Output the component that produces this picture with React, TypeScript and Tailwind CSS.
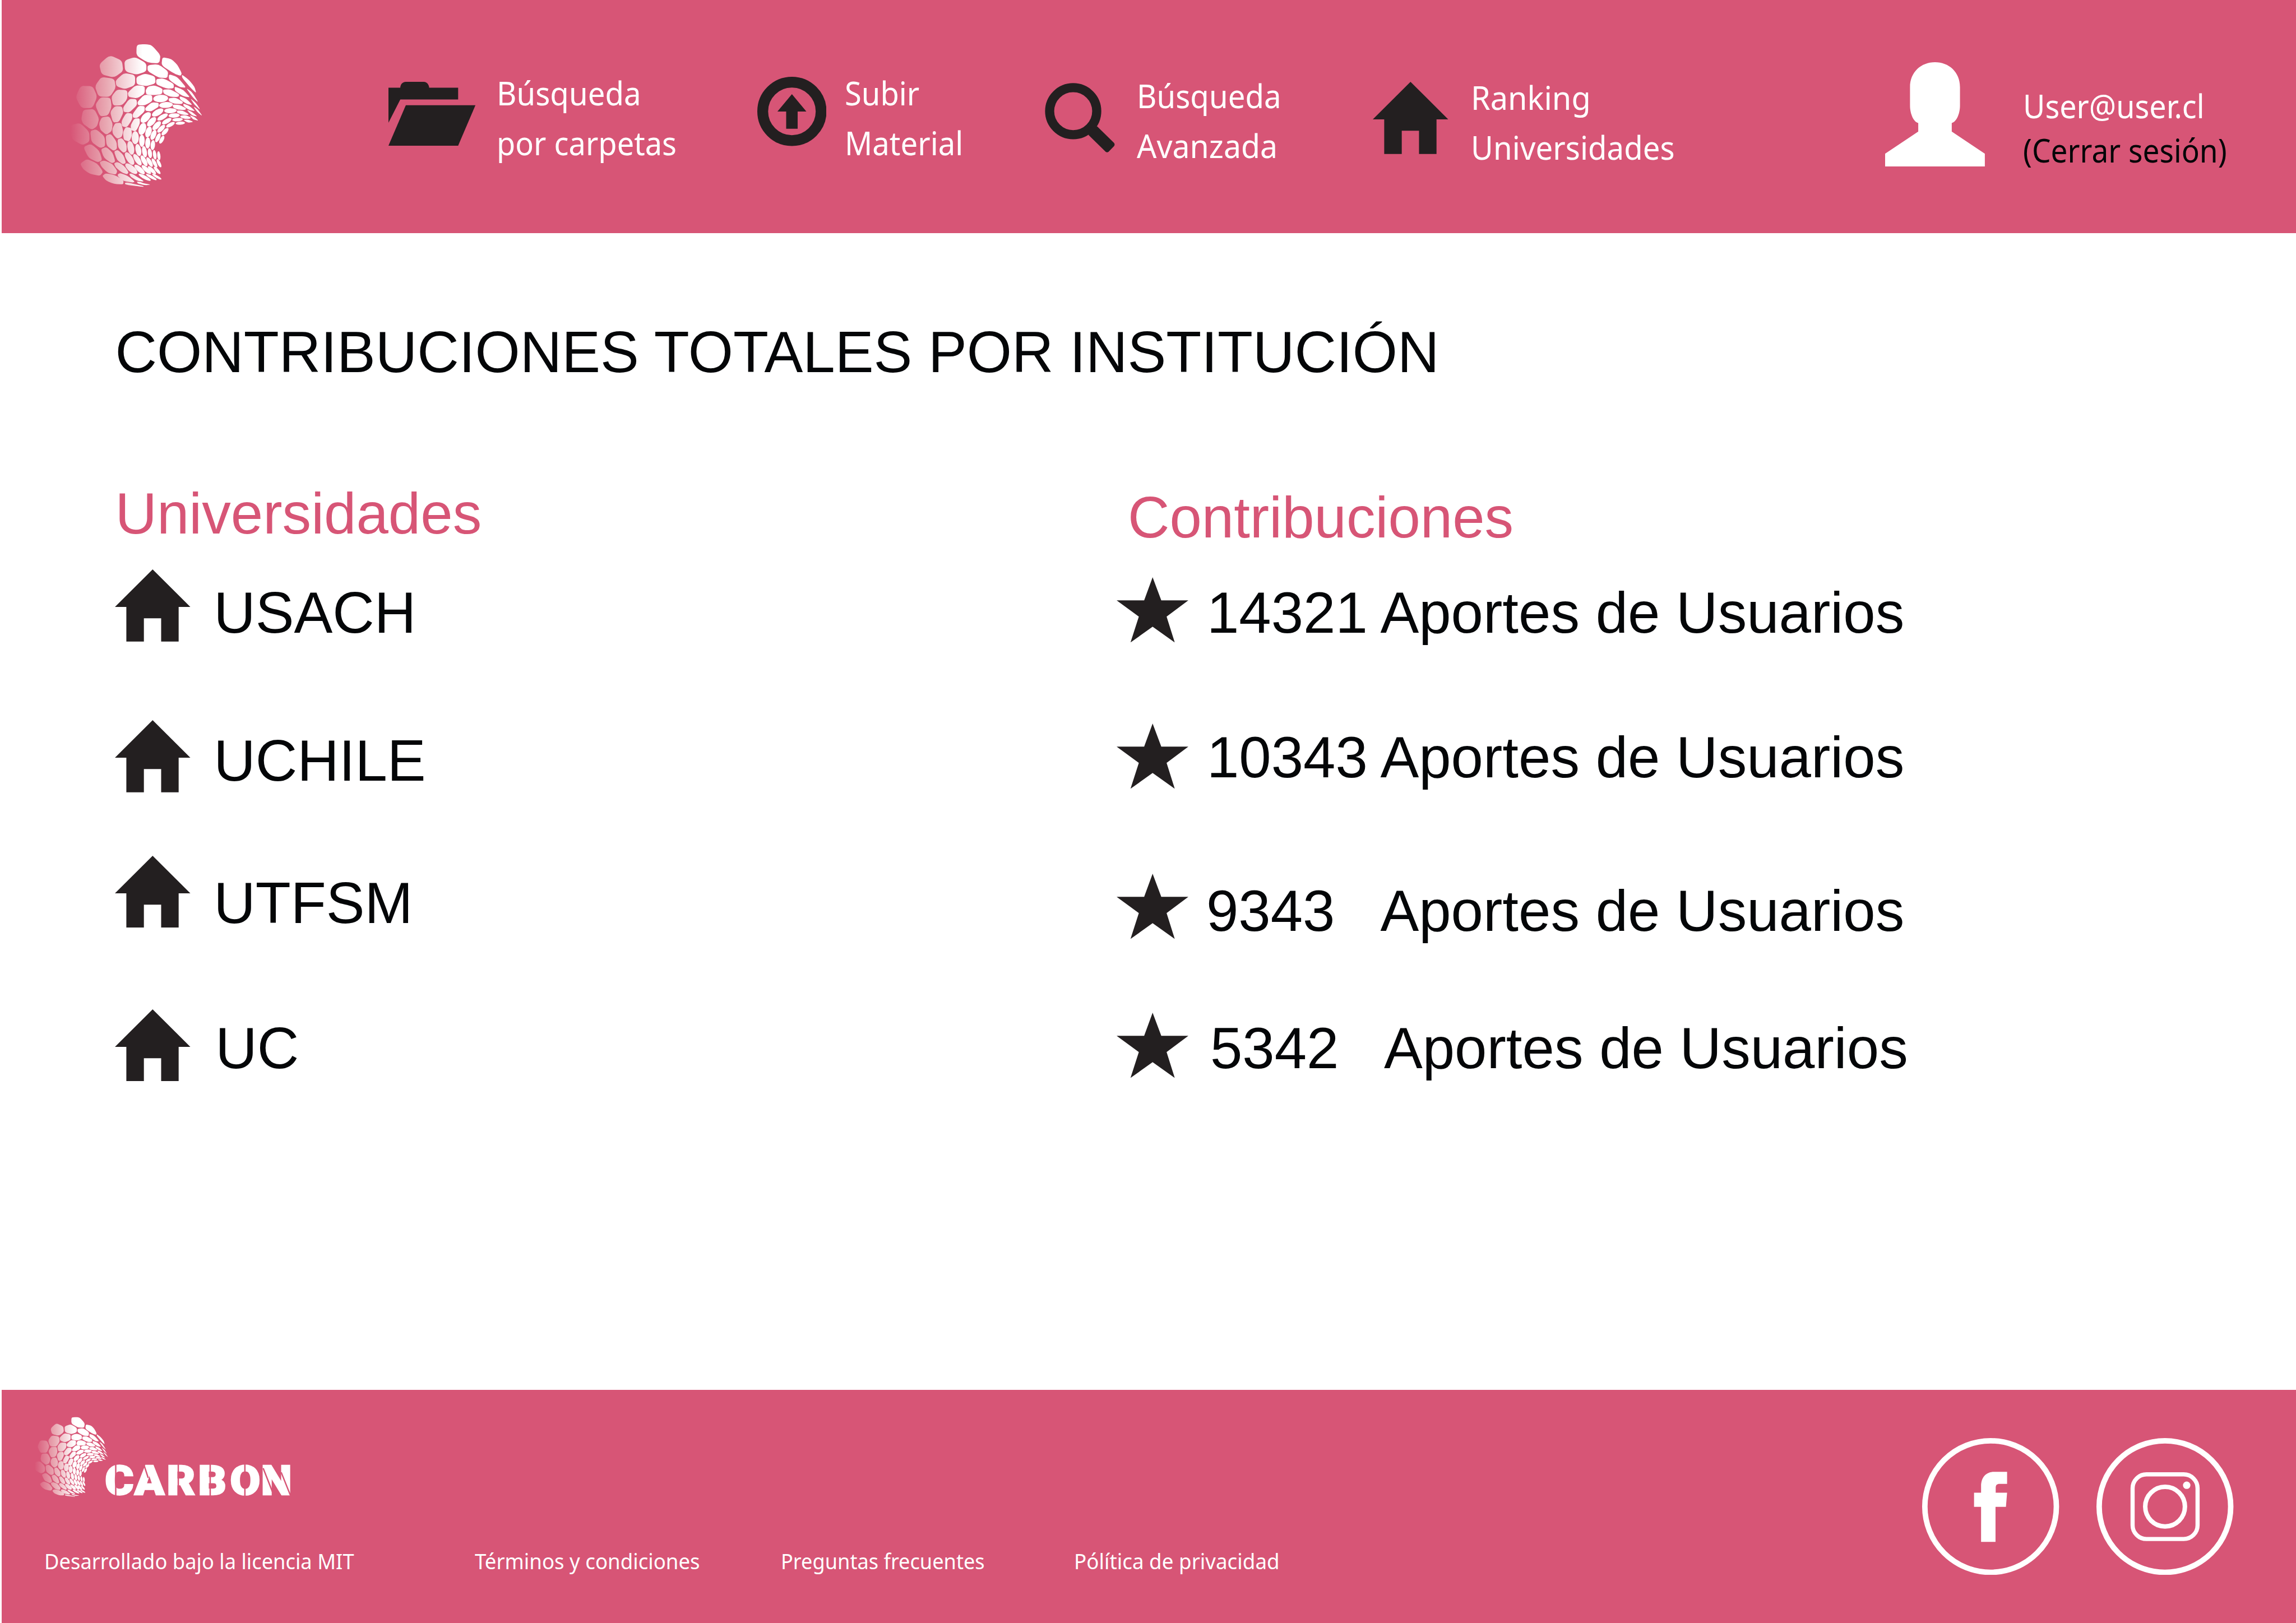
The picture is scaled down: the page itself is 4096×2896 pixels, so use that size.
import type { ReactNode } from "react";

/* ---------- Logo ---------- */

// Large cells, as corner points that are rounded when drawn.
const CELLS: string[] = [
  "497,80 553,75 594,82 652,146 644,200 572,196 495,150",
  "664,160 722,172 760,208 790,264 782,282 735,264 658,212",
  "790,272 835,306 872,352 884,394 850,362 792,294",
  "254,206 322,147 402,182 410,250 350,292 270,272",
  "417,182 487,158 560,200 560,252 496,274 422,252",
  "568,212 637,205 702,252 696,296 640,292 568,250",
  "706,270 760,288 820,358 775,354 706,306",
  "818,360 855,385 899,456 860,420",
  "844,426 882,457 911,503 874,470",
  "864,478 895,500 924,543 888,513",
  "226,348 268,288 352,300 362,358 324,417 250,416",
  "360,312 415,262 487,276 487,342 420,368 366,348",
  "495,288 552,266 616,285 620,330 560,348 497,336",
  "624,302 670,297 737,332 738,362 690,364 624,336",
  "743,350 797,370 845,421 800,414 745,378",
  "775,412 820,430 860,471 823,464 778,434",
  "799,460 840,477 878,511 838,502 801,478",
  "821,500 856,515 892,545 855,537",
  "839,535 872,548 899,572 863,564",
  "101,420 134,346 212,348 242,415 210,490 139,490",
  "333,415 370,370 437,374 437,432 402,472 344,474",
  "439,390 490,342 550,347 549,396 500,427 445,418",
  "555,376 570,350 612,343 666,364 662,400 610,406 560,402",
  "667,371 715,368 774,400 768,418 715,417 672,396",
  "704,426 750,422 798,450 792,464 740,462 706,446",
  "730,467 775,469 819,492 811,503 765,500 733,486",
  "757,506 795,506 836,530 828,535 790,532 760,521",
  "778,540 815,536 850,551 842,560 812,560 784,552",
  "799,567 830,564 866,580 830,585",
  "228,470 262,420 327,422 335,482 312,537 260,545",
  "325,515 355,478 402,479 411,520 382,580 344,584",
  "409,485 450,430 496,432 500,470 450,519 413,515",
  "502,450 545,404 597,406 599,445 550,472 506,472",
  "138,562 150,501 222,496 254,558 240,610 204,631 150,592",
  "253,590 270,550 320,543 342,592 335,640 300,664 262,632",
  "339,625 358,587 397,586 410,640 400,678 370,689 342,657",
  "398,575 430,521 468,526 469,562 435,614 403,610",
  "471,528 510,476 549,477 549,512 500,555 473,552",
  "552,490 595,452 640,456 640,482 590,512 555,508",
  "67,600 130,586 190,645 191,708 145,731 74,690",
  "196,638 235,627 290,675 293,738 260,749 204,710",
  "296,668 330,657 367,708 370,755 346,768 302,732",
  "373,692 402,684 432,724 432,770 410,781 377,747",
  "408,650 425,613 462,618 467,665 451,707 414,697",
  "458,600 482,558 517,557 518,592 492,642 461,634",
  "151,742 200,722 255,766 274,828 245,842 185,812",
  "265,756 300,742 342,780 359,838 335,848 284,812",
  "350,770 375,761 412,795 428,847 405,854 369,825",
  "130,850 175,820 240,848 280,902 260,930 192,916 150,886",
  "256,840 285,829 337,850 372,897 362,922 310,910 270,872",
  "350,848 375,839 417,865 445,907 435,920 400,907 362,876",
  "274,930 295,913 355,923 412,960 410,985 350,982 300,962",
  "374,920 390,911 440,930 486,968 470,973 410,962 376,934",
  "448,917 465,914 542,962 538,967 500,961 460,937",
  "420,974 440,973 543,997 541,1001 424,987",
  "497,967 520,969 540,977 590,987 550,990 505,979",
];

// Small cells as [cx, cy, rx, ry, rotation].
const DOTS: number[][] = [
  [653, 428, 48, 24, -3], [687, 470, 44, 19, -4], [716, 507, 40, 16, -2], [740, 538, 36, 14, -3],
  [762, 565, 34, 11, -4], [780, 588, 30, 10, -4], [633, 519, 41, 19, -30], [665, 548, 38, 15, -30],
  [692, 575, 34, 14, -30], [716, 598, 31, 12, -28], [681, 643, 30, 13, -47], [660, 695, 28, 12, -62],
  [556, 551, 42, 23, -47], [594, 579, 38, 19, -47], [627, 604, 36, 17, -47], [656, 624, 33, 14, -45],
  [488, 682, 23, 42, 0], [534, 625, 23, 40, 18], [574, 645, 19, 36, 18], [606, 664, 16, 34, 22],
  [635, 682, 13, 32, 25], [459, 748, 21, 45, -12], [531, 702, 18, 39, 0], [569, 716, 16, 36, 2],
  [602, 730, 14, 32, 5], [508, 762, 18, 40, -12], [548, 773, 15, 37, -10], [583, 783, 13, 32, -8],
  [614, 793, 11, 31, -8], [641, 799, 10, 29, -6], [451, 817, 20, 47, -33], [502, 825, 17, 43, -33],
  [545, 832, 15, 39, -28], [581, 840, 13, 35, -30], [613, 846, 11, 33, -28], [642, 848, 10, 29, -26],
  [462, 883, 48, 20, 40], [516, 888, 43, 16, 42], [560, 889, 39, 14, 43], [596, 893, 35, 12, 45],
  [630, 894, 31, 10, 48], [549, 939, 44, 11, 28], [592, 937, 39, 9, 29], [628, 935, 34, 8, 30],
];

function roundedPath(points: string): string {
  const p = points.split(" ").map((s) => s.split(",").map(Number));
  const n = p.length;
  const at = (a: number[], b: number[], t: number) =>
    `${(a[0] + (b[0] - a[0]) * t).toFixed(1)} ${(a[1] + (b[1] - a[1]) * t).toFixed(1)}`;
  let d = "";
  for (let i = 0; i < n; i++) {
    const prev = p[(i + n - 1) % n];
    const cur = p[i];
    const next = p[(i + 1) % n];
    d += `${i === 0 ? "M" : "L"}${at(cur, prev, 0.3)}Q${cur[0]} ${cur[1]} ${at(cur, next, 0.3)}`;
  }
  return d + "Z";
}

function Logo({ id, className }: { id: string; className: string }) {
  return (
    <svg viewBox="0 0 1020 1080" className={className} aria-hidden="true">
      <defs>
        <linearGradient id={id} gradientUnits="userSpaceOnUse" x1="70" y1="0" x2="535" y2="0">
          <stop offset="0" stopColor="#d75576" />
          <stop offset="0.5" stopColor="#e9a9b3" />
          <stop offset="1" stopColor="#ffffff" />
        </linearGradient>
      </defs>
      <path fill={`url(#${id})`} d={CELLS.map(roundedPath).join("")} />
      {DOTS.map(([cx, cy, rx, ry, r], i) => {
        // The gradient follows the whole logo, so each dot's outline is computed in place.
        const a = (r * Math.PI) / 180;
        const pts = Array.from({ length: 28 }, (_, k) => {
          const t = (k / 28) * 2 * Math.PI;
          const x = rx * Math.cos(t);
          const y = ry * Math.sin(t);
          return `${(cx + x * Math.cos(a) - y * Math.sin(a)).toFixed(1)},${(cy + x * Math.sin(a) + y * Math.cos(a)).toFixed(1)}`;
        });
        return <polygon key={i} fill={`url(#${id})`} points={pts.join(" ")} />;
      })}
    </svg>
  );
}

/* ---------- Icons ---------- */

function House({ className }: { className: string }) {
  return (
    <svg viewBox="0 0 163 156" className={className} fill="#231f20" aria-hidden="true">
      <path d="M81.5 0 163 81H137.7V156H99.9V105.7H62.6V156H24.7V81H0Z" />
    </svg>
  );
}

function Star({ className }: { className: string }) {
  return (
    <svg viewBox="0 0 155 141" className={className} fill="#231f20" aria-hidden="true">
      <path d="M77.8 0 96.5 50H155L108 85 125.6 141 77.8 107 30 141 48 85 0 50H59.5Z" />
    </svg>
  );
}

function Folder({ className }: { className: string }) {
  return (
    <svg viewBox="0 0 188 138" className={className} fill="#231f20" aria-hidden="true">
      <path d="M0 12.7H25.5C26 5 31 0 37.5 0H76C82 0 87.5 5 88 12.7H150.6V38.3H25.6L0 88.5Z" />
      <path d="M37.5 50.7H188L150.6 138H0Z" />
    </svg>
  );
}

function Upload({ className }: { className: string }) {
  return (
    <svg viewBox="0 0 149.6 149.6" className={className} fill="#231f20" aria-hidden="true">
      <circle cx="74.8" cy="74.8" r="63.1" fill="none" stroke="#231f20" strokeWidth="23.4" />
      <path d="M74.8 37.5 106.1 75H87.2V112.4H62.4V75H43.5Z" />
    </svg>
  );
}

function Search({ className }: { className: string }) {
  return (
    <svg viewBox="0 0 152 151" className={className} fill="#231f20" aria-hidden="true">
      <circle cx="61.2" cy="61" r="50.9" fill="none" stroke="#231f20" strokeWidth="19.7" />
      <path d="M113 94 149.5 129.5Q152 133 149.5 136.5L138 148.5Q134.5 151.5 131 148.5L94.5 112.5 98 97Z" />
    </svg>
  );
}

function Person({ className }: { className: string }) {
  return (
    <svg viewBox="0 0 215.5 225.3" className={className} fill="#fff" aria-hidden="true">
      <path d="M53.8 54C53.8 21 78 0 107.8 0S161.8 21 161.8 54V94C161.8 113 153 130 144 131.3V150L215.5 197.7V225.3H0V197.7L71.6 150V131.3C62.6 130 53.8 113 53.8 94Z" />
    </svg>
  );
}

function Facebook({ className }: { className: string }) {
  return (
    <svg viewBox="0 0 296 296" className={className} fill="#fff" aria-hidden="true">
      <circle cx="148" cy="148" r="142.1" fill="none" stroke="#fff" strokeWidth="11.8" />
      <path d="M183.6 73V99H167.5C161.5 99 159.3 101.5 159 107V118H183.6L181.1 148.7H158.6V224.3H127.4V148.7H112.2V118H127.4V104C127.4 86 137 73 156 73Z" />
    </svg>
  );
}

function Instagram({ className }: { className: string }) {
  return (
    <svg viewBox="0 0 296 296" className={className} fill="none" stroke="#fff" aria-hidden="true">
      <circle cx="148" cy="148" r="142.1" strokeWidth="11.8" />
      <rect x="78.1" y="78.5" width="140.4" height="139.7" rx="30" strokeWidth="9" />
      <circle cx="148.3" cy="148.2" r="42.9" strokeWidth="9.7" />
      <circle cx="195" cy="102" r="8" fill="#fff" stroke="none" />
    </svg>
  );
}

// Stencil wordmark: heavy letters cut by thin slits.
function Wordmark({ className }: { className: string }) {
  return (
    <svg viewBox="0 0 402 75" className={className}>
      <text
        transform="scale(1.08 1)"
        x="-1 58.3 122.8 185.5 249.7 311.5"
        y="70.6"
        fill="#fff"
        stroke="#fff"
        strokeWidth="3"
        strokeLinejoin="miter"
        className="font-['Roboto'] text-[87.5px] font-black"
      >
        CARBON
      </text>
      <g stroke="#d75576" strokeWidth="3">
        <path d="M22.3 0V75M157.5 0V75M226.5 0V75M301.5 0V75M84 8 92.5 34M341 13 361 64M380 22 400 72" />
      </g>
    </svg>
  );
}

/* ---------- Page parts ---------- */

function Line({ className, children }: { className: string; children: ReactNode }) {
  return <span className={`block origin-left ${className}`}>{children}</span>;
}

const universities = [
  { name: "USACH", row: "h-[268.9px]", text: "mt-[25.5px] ml-[41.2px]" },
  { name: "UCHILE", row: "h-[241.6px]", text: "mt-[21.5px] ml-[41.2px]" },
  { name: "UTFSM", row: "h-[274.1px]", text: "mt-[33.7px] ml-[41.2px]" },
  { name: "UC", row: "h-[128.8px]", text: "mt-[18.5px] ml-[44.3px]" },
];

const contributions = [
  { count: "14321", row: "h-[261.4px]", text: "mt-[12px] ml-[33px]", number: "w-[309.5px]" },
  { count: "10343", row: "h-[267.6px]", text: "mt-[9px] ml-[33px]", number: "w-[309.5px]" },
  { count: "9343", row: "h-[248.5px]", text: "mt-[15.6px] ml-[32px]", number: "w-[310.5px]" },
  { count: "5342", row: "h-[116.4px]", text: "mt-[12px] ml-[39px]", number: "w-[310px]" },
];

export default function App() {
  return (
    <div className="flex h-[2896px] w-[4096px] flex-col overflow-hidden bg-white pl-[3.4px] font-['Liberation_Sans',sans-serif] text-[#040608]">
      <header className="grid h-[415.6px] shrink-0 grid-cols-[690.1px_657.2px_513.4px_585.4px_913.2px_1fr] items-start bg-[#d75576] font-['Noto_Sans',sans-serif] text-[58.5px] leading-[89.4px] whitespace-nowrap text-white">
        <Logo id="logo-top" className="mt-[57.8px] ml-[103.9px] h-[297.2px] w-[280.7px]" />
        <a className="flex items-start">
          <Folder className="mt-[146.4px] h-[113.9px] w-[155.2px] shrink-0" />
          <span className="mt-[121px] ml-[37.6px]">
            <Line className="scale-x-[0.933]">Búsqueda</Line>
            <Line className="scale-x-[0.926]">por carpetas</Line>
          </span>
        </a>
        <a className="flex items-start">
          <Upload className="mt-[137.1px] size-[123.5px] shrink-0" />
          <span className="mt-[121px] ml-[32.5px]">
            <Line className="scale-x-[0.929]">Subir</Line>
            <Line className="scale-x-[0.93]">Material</Line>
          </span>
        </a>
        <a className="flex items-start">
          <Search className="mt-[147.6px] h-[124.7px] w-[125.5px] shrink-0" />
          <span className="mt-[125.5px] ml-[38px]">
            <Line className="scale-x-[0.933]">Búsqueda</Line>
            <Line className="scale-x-[0.947]">Avanzada</Line>
          </span>
        </a>
        <a className="flex items-start">
          <House className="mt-[146.1px] h-[128.8px] w-[134.6px] shrink-0" />
          <span className="mt-[128.5px] ml-[40.4px]">
            <Line className="scale-x-[0.955]">Ranking</Line>
            <Line className="scale-x-[0.933]">Universidades</Line>
          </span>
        </a>
        <div className="flex items-start">
          <Person className="mt-[110.6px] h-[186px] w-[177.9px] shrink-0" />
          <span className="mt-[148.6px] ml-[68.7px] leading-[79px]">
            <Line className="scale-x-[0.921]">User@user.cl</Line>
            <Line className="scale-x-[0.909] text-[#040608]">(Cerrar sesión)</Line>
          </span>
        </div>
      </header>

      <main className="flex h-[2064.8px] shrink-0 flex-col pl-[202px] text-[103.2px] leading-none whitespace-nowrap">
        <h1 className="mt-[161.1px]">CONTRIBUCIONES TOTALES POR INSTITUCIÓN</h1>
        <div className="flex">
          <section className="mt-[185.3px] w-[1786.5px]">
            <h2 className="mb-[47.7px] text-[#d75576]">Universidades</h2>
            {universities.map((u) => (
              <div key={u.name} className={`flex items-start ${u.row}`}>
                <House className="h-[128.8px] w-[134.6px] shrink-0" />
                <span className={u.text}>{u.name}</span>
              </div>
            ))}
          </section>
          <section className="mt-[191.8px]">
            <h2 className="mb-[54.7px] ml-[20px] text-[#d75576]">Contribuciones</h2>
            {contributions.map((c) => (
              <div key={c.count} className={`flex items-start ${c.row}`}>
                <Star className="h-[116.4px] w-[128px] shrink-0" />
                <span className={`flex ${c.text}`}>
                  <span className={c.number}>{c.count}</span>
                  <span>Aportes de Usuarios</span>
                </span>
              </div>
            ))}
          </section>
        </div>
      </main>

      <footer className="flex grow items-start justify-between bg-[#d75576] pr-[111.4px] text-white">
        <div className="pt-[36.5px]">
          <div className="flex h-[166.1px] items-start">
            <Logo id="logo-bottom" className="ml-[47.2px] h-[166.1px] w-[156.9px]" />
            <Wordmark className="mt-[92px] -ml-[19.3px] h-[61.9px] w-[331.9px] overflow-visible" />
          </div>
          <nav className="mt-[82.1px] grid grid-cols-[768.1px_545.9px_523.1px_500px] pl-[75.5px] font-['Noto_Sans',sans-serif] text-[39px] leading-none whitespace-nowrap">
            <a className="block origin-left scale-x-[0.931]">Desarrollado bajo la licencia MIT</a>
            <a className="block origin-left scale-x-[0.939]">Términos y condiciones</a>
            <a className="block origin-left scale-x-[0.927]">Preguntas frecuentes</a>
            <a className="block origin-left scale-x-[0.943]">Pólítica de privacidad</a>
          </nav>
        </div>
        <div className="flex gap-[66.4px] pt-[85.7px]">
          <Facebook className="size-[244.4px]" />
          <Instagram className="size-[244.4px]" />
        </div>
      </footer>
    </div>
  );
}
